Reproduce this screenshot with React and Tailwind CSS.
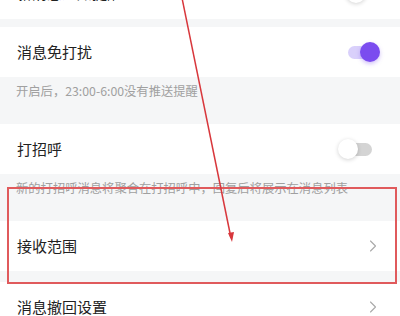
import { ChevronRight } from 'lucide-react';

const font = { fontFamily: '"Noto Sans CJK SC", "Noto Sans", sans-serif' };

function Toggle({ on }) {
    if (on) {
        return (
            <div className="relative w-[34px] h-[20px] flex items-center">
                <div className="ml-[2px] w-[28px] h-[13px] rounded-full bg-[#d9d0fb]" />
                <div className="absolute right-0 top-0 w-[20px] h-[20px] rounded-full bg-[#7b4cef] shadow-[0_2px_4px_rgba(123,76,239,0.35)]" />
            </div>
        );
    }
    return (
        <div className="relative w-[34px] h-[20px] flex items-center justify-end">
            <div className="w-[26px] h-[13px] rounded-full bg-[#d4d4d4]" />
            <div className="absolute left-0 top-0 w-[20px] h-[20px] rounded-full bg-white shadow-[0_1px_4px_rgba(0,0,0,0.18)]" />
        </div>
    );
}

function Row({ title, right, className = '' }) {
    return (
        <div className={`h-[50px] bg-white flex items-center justify-between pl-[17px] pr-[20px] ${className}`}>
            <span className="text-[15px] text-[#222]">{title}</span>
            {right}
        </div>
    );
}

function Desc({ text }) {
    return (
        <div className="h-[47px] bg-[#f5f6f7] pl-[16px] pt-[6px]">
            <p className="text-[12.3px] leading-[17px] text-[#a0a0a0]">{text}</p>
        </div>
    );
}

const Chevron = () => (
    <ChevronRight size={20} strokeWidth={1.3} className="text-[#a9a9a9] -mr-[3px]" />
);

export default function App() {
    return (
        <div className="relative w-[400px] h-[316px] overflow-hidden bg-[#f5f6f7]" style={font}>
            <Row title="新消息通知提醒" right={<Toggle on={false} />} className="-mt-[33px] h-[52px]" />
            <div className="h-[8px]" />
            <Row title="消息免打扰" right={<Toggle on />} />
            <Desc text="开启后，23:00-6:00没有推送提醒" />
            <Row title="打招呼" right={<div className="mr-[8px]"><Toggle on={false} /></div>} />
            <Desc text="新的打招呼消息将聚合在打招呼中，回复后将展示在消息列表" />
            <Row title="接收范围" right={<Chevron />} />
            <div className="h-[11px]" />
            <Row title="消息撤回设置" right={<Chevron />} />

            {/* annotation overlay */}
            <div className="absolute left-[7px] top-[187px] w-[390px] h-[97px] border-2 border-[#e05a5c]" />
            <svg className="absolute left-0 top-0" width="400" height="316">
                <line x1="182" y1="-2" x2="231" y2="238" stroke="#d8373c" strokeWidth="1.5" />
                <polygon points="228,233 234,232 232,242" fill="#d8373c" />
            </svg>
        </div>
    );
}
